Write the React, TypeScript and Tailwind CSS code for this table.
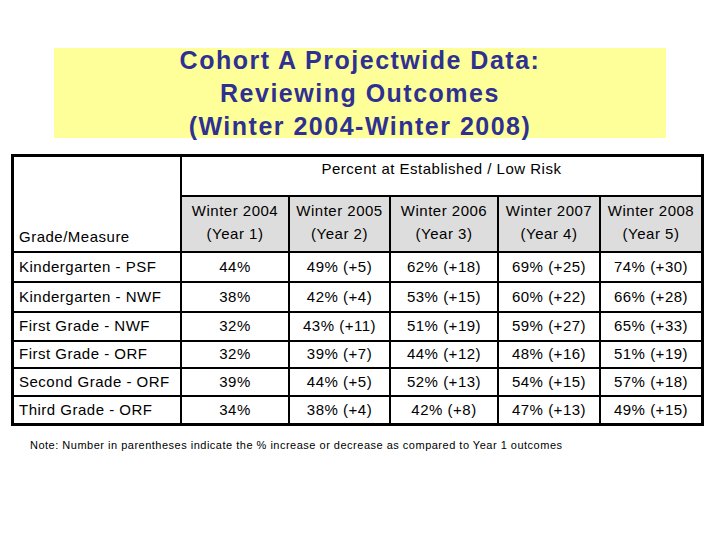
import React from "react";

const years = [
  ["Winter 2004", "(Year 1)"],
  ["Winter 2005", "(Year 2)"],
  ["Winter 2006", "(Year 3)"],
  ["Winter 2007", "(Year 4)"],
  ["Winter 2008", "(Year 5)"],
];

const rows: { label: string; vals: string[]; h: string }[] = [
  { label: "Kindergarten - PSF", vals: ["44%", "49% (+5)", "62% (+18)", "69% (+25)", "74% (+30)"], h: "h-[28px]" },
  { label: "Kindergarten - NWF", vals: ["38%", "42% (+4)", "53% (+15)", "60% (+22)", "66% (+28)"], h: "h-[28px]" },
  { label: "First Grade - NWF", vals: ["32%", "43% (+11)", "51% (+19)", "59% (+27)", "65% (+33)"], h: "h-[27px]" },
  { label: "First Grade - ORF", vals: ["32%", "39% (+7)", "44% (+12)", "48% (+16)", "51% (+19)"], h: "h-[25px]" },
  { label: "Second Grade - ORF", vals: ["39%", "44% (+5)", "52% (+13)", "54% (+15)", "57% (+18)"], h: "h-[26px]" },
  { label: "Third Grade - ORF", vals: ["34%", "38% (+4)", "42% (+8)", "47% (+13)", "49% (+15)"], h: "h-[26px]" },
];

export default function App() {
  return (
    <div
      className="w-[720px] h-[540px] bg-white overflow-hidden pt-[48px] text-black"
      style={{ fontFamily: "'Liberation Sans', Arial, sans-serif" }}
    >
      <div className="ml-[54px] w-[612px] h-[90px] bg-[#ffff99] flex flex-col items-center justify-center">
        <div className="text-[25px] font-bold leading-[33px] tracking-[1.5px] text-[#2e3192] text-center whitespace-nowrap">
          <div>Cohort A Projectwide Data:</div>
          <div>Reviewing Outcomes</div>
          <div>(Winter 2004-Winter 2008)</div>
        </div>
      </div>

      <div className="ml-[11px] mt-[16px] w-[693px] border-[3px] border-black bg-black grid grid-cols-[166px_106px_99px_106px_100px_100px] grid-rows-[38px_54px] gap-[2px] text-[15px] tracking-[0.5px]">
        <div className="row-span-2 bg-white flex items-end pl-[5px] pb-[4px] leading-[20px]">Grade/Measure</div>
        <div className="col-span-5 bg-white flex justify-center pt-[3px] leading-[18px]">
          Percent at Established / Low Risk
        </div>
        {years.map(([a, b]) => (
          <div key={a} className="bg-[#dddddd] flex flex-col items-center pt-[2px] leading-[23px]">
            <div>{a}</div>
            <div>{b}</div>
          </div>
        ))}
        {rows.map((r) => (
          <React.Fragment key={r.label}>
            <div className={`${r.h} bg-white flex items-center pl-[5px] whitespace-nowrap`}>{r.label}</div>
            {r.vals.map((v, i) => (
              <div key={i} className={`${r.h} bg-white flex items-center justify-center whitespace-nowrap`}>
                {v}
              </div>
            ))}
          </React.Fragment>
        ))}
      </div>

      <div className="ml-[30px] mt-[12px] text-[11px] leading-[14px] tracking-[0.5px]">
        Note: Number in parentheses indicate the % increase or decrease as compared to Year 1 outcomes
      </div>
    </div>
  );
}
